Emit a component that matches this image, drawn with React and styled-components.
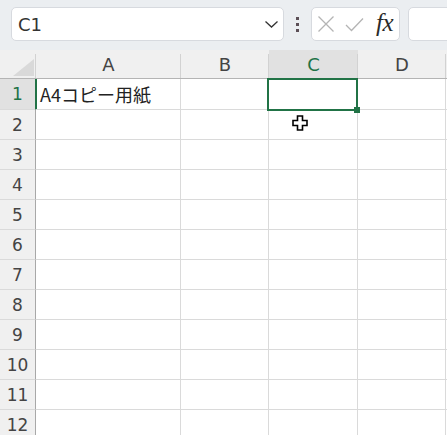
import React from 'react';
import styled, { createGlobalStyle } from 'styled-components';

const GREEN = '#217346';

const Global = createGlobalStyle`
  html, body { margin: 0; padding: 0; background: #fff; }
  body { width: 447px; height: 435px; overflow: hidden; font-family: "DejaVu Sans", sans-serif; }
`;

const Window = styled.div`
  width: 447px;
  height: 435px;
  overflow: hidden;
  display: flex;
  flex-direction: column;
  background: #fff;
`;

const Toolbar = styled.div`
  height: 50px;
  flex: none;
  box-sizing: border-box;
  background: #ebeef1;
  display: flex;
  align-items: flex-start;
  padding: 7px 0 0 11px;
  overflow: hidden;
`;

const Field = styled.div`
  height: 34px;
  box-sizing: border-box;
  background: #fff;
  border: 1px solid #d7dadf;
  border-radius: 5px;
  display: flex;
  align-items: center;
  flex: none;
`;

const NameBox = styled(Field)`
  width: 273px;
  justify-content: space-between;
  padding: 0 4px 0 6px;
  font-family: "DejaVu Sans", sans-serif;
  font-size: 18px;
  color: #333;
`;

const Grip = styled.div`
  width: 27px;
  height: 34px;
  flex: none;
  display: flex;
  flex-direction: column;
  align-items: center;
  justify-content: center;
  gap: 3px;
`;

const Dot = styled.span`
  width: 3px;
  height: 3px;
  background: #5c4f56;
`;

const FxBox = styled(Field)`
  width: 89px;
  padding: 0 0 0 5px;
  gap: 10px;
`;

const Fx = styled.span`
  font-family: "Liberation Serif", serif;
  font-style: italic;
  font-size: 25px;
  color: #2a2a2a;
  line-height: 1;
  margin-left: 2px;
  margin-top: -3px;
  letter-spacing: -0.5px;
`;

const FormulaInput = styled(Field)`
  width: 80px;
  margin-left: 8px;
`;

const Sheet = styled.div`
  position: relative;
  flex: none;
  display: grid;
  grid-template-columns: 36px 145px 88px 89px 88px 1fr;
  grid-template-rows: 29px 31px repeat(11, 30px);
`;

const Corner = styled.div`
  background: #f0f0f0;
  border-bottom: 1px solid #b4b4b4;
  display: flex;
  align-items: flex-end;
  justify-content: flex-end;
  padding: 0 2px 2px 0;
  position: relative;
  &::after {
    content: '';
    position: absolute;
    right: 0;
    top: 4px;
    bottom: 0;
    width: 1px;
    background: #d2d2d2;
  }
`;

const ColHead = styled.div`
  position: relative;
  background: ${p => (p.$selected ? '#e1e1e1' : '#f0f0f0')};
  border-bottom: 1px solid ${p => (p.$selected ? GREEN : '#b4b4b4')};
  display: flex;
  align-items: center;
  justify-content: center;
  font-family: "DejaVu Sans", sans-serif;
  font-size: 18px;
  color: ${p => (p.$selected ? GREEN : '#444')};
  &::after {
    content: '';
    position: absolute;
    right: 0;
    top: 4px;
    bottom: 0;
    width: 1px;
    background: #d2d2d2;
  }
`;

const RowHead = styled.div`
  background: ${p => (p.$selected ? '#e1e1e1' : '#f0f0f0')};
  border-right: 1px solid ${p => (p.$selected ? GREEN : '#a8a8a8')};
  box-shadow: ${p => (p.$selected ? `1px 0 0 ${GREEN}` : 'none')};
  border-bottom: 1px solid #dadada;
  display: flex;
  align-items: center;
  justify-content: center;
  font-family: "DejaVu Sans", sans-serif;
  font-size: 17px;
  color: ${p => (p.$selected ? GREEN : '#444')};
`;

const Cell = styled.div`
  border-right: 1px solid #dadada;
  border-bottom: 1px solid #dadada;
  display: flex;
  align-items: center;
  padding-left: 4px;
  white-space: nowrap;
  font-family: "Noto Sans CJK JP", sans-serif;
  font-size: 18px;
  color: #222;
  min-width: 0;
`;

const Selection = styled.div`
  position: absolute;
  left: 267px;
  top: 28px;
  width: 91px;
  height: 33px;
  box-sizing: border-box;
  border: 2px solid ${GREEN};
  pointer-events: none;
`;

const FillHandle = styled.div`
  position: absolute;
  left: 354px;
  top: 57px;
  width: 6px;
  height: 6px;
  background: ${GREEN};
`;

const Pointer = styled.svg`
  position: absolute;
  left: 292px;
  top: 65px;
`;

const columns = ['A', 'B', 'C', 'D', ''];
const rows = Array.from({ length: 12 }, (_, i) => i + 1);
const data = { '1-A': 'A4コピー用紙' };

export default function App() {
  return (
    <Window>
      <Global />
      <Toolbar>
        <NameBox>
          <span>C1</span>
          <svg width="15" height="9" viewBox="0 0 15 9">
            <path d="M1.5 1.5 L7.5 7 L13.5 1.5" fill="none" stroke="#333" strokeWidth="1.3" />
          </svg>
        </NameBox>
        <Grip>
          <Dot />
          <Dot />
          <Dot />
        </Grip>
        <FxBox>
          <svg width="18" height="18" viewBox="0 0 18 18">
            <path d="M1.5 1.5 L16.5 16.5 M16.5 1.5 L1.5 16.5" stroke="#b4b4b4" strokeWidth="1.3" fill="none" />
          </svg>
          <svg width="19" height="15" viewBox="0 0 19 15">
            <path d="M1 8 L6.5 13.5 L18 1.5" stroke="#b4b4b4" strokeWidth="1.3" fill="none" />
          </svg>
          <Fx>fx</Fx>
        </FxBox>
        <FormulaInput />
      </Toolbar>
      <Sheet>
        <Corner>
          <svg width="21" height="17" viewBox="0 0 21 17">
            <path d="M21 0 L21 17 L0 17 Z" fill="#d9d9d9" />
          </svg>
        </Corner>
        {columns.map((c, i) => (
          <ColHead key={'h' + i} $selected={c === 'C'}>{c}</ColHead>
        ))}
        {rows.map(r => (
          <React.Fragment key={r}>
            <RowHead $selected={r === 1}>{r}</RowHead>
            {columns.map((c, i) => (
              <Cell key={i}>{data[`${r}-${c}`] || ''}</Cell>
            ))}
          </React.Fragment>
        ))}
        <Selection />
        <FillHandle />
        <Pointer width="17" height="17" viewBox="0 0 17 17">
          <path
            d="M5.5 1 H10.5 V5.5 H15 V10.5 H10.5 V15 H5.5 V10.5 H1 V5.5 H5.5 Z"
            fill="#fff"
            stroke="#000"
            strokeWidth="1.6"
            strokeLinejoin="miter"
          />
        </Pointer>
      </Sheet>
    </Window>
  );
}
